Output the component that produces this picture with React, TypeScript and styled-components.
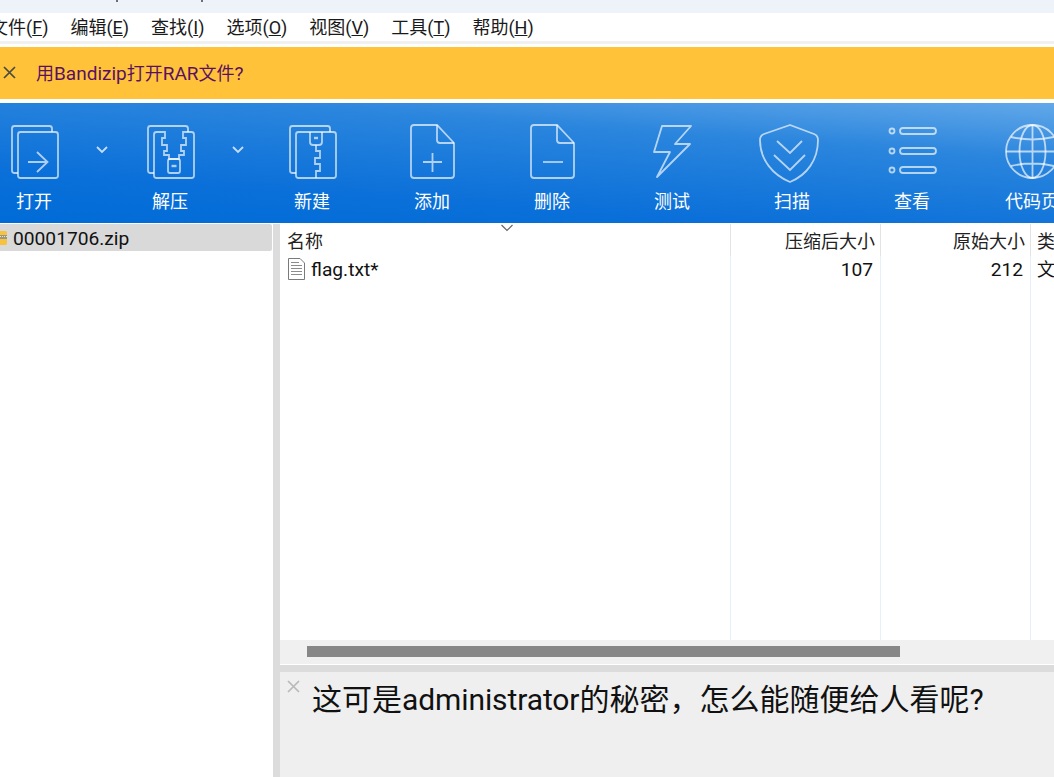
import React from 'react'
import styled, { createGlobalStyle } from 'styled-components'

const GlobalStyle = createGlobalStyle`
  html, body {
    margin: 0;
    padding: 0;
    background: #fff;
    overflow: hidden;
  }
  * { box-sizing: border-box; }
`

const Page = styled.div`
  width: 1054px;
  height: 777px;
  overflow: hidden;
  display: flex;
  flex-direction: column;
  font-family: Roboto, "Noto Sans CJK SC", sans-serif;
  font-size: 18px;
  color: #111;
  background: #fff;
`

const TitleBar = styled.div`
  height: 13px;
  flex: none;
  background: #eef2f9;
  display: flex;
  align-items: flex-start;
  padding-left: 116px;
  gap: 83px;
`

const TitleTick = styled.span`
  width: 2px;
  height: 2px;
  background: #6b6f78;
`

const MenuBar = styled.nav`
  height: 28px;
  flex: none;
  display: flex;
  align-items: center;
  gap: 22px;
  margin-left: -10px;
  padding-top: 2px;
  white-space: nowrap;
  line-height: 26px;
`

const MenuItem = styled.span`
  color: #1a1a1a;
`

const MenuRule = styled.div`
  height: 3px;
  flex: none;
  background: #f0f0f0;
  margin-bottom: 3px;
`

const Notice = styled.div`
  height: 52px;
  flex: none;
  background: #ffc239;
  display: flex;
  align-items: center;
  gap: 19px;
  padding: 0 0 2px 2px;
  margin-bottom: 4px;
  color: #5a1162;
  font-size: 19px;
`

const NoticeCjk = styled.span`
  font-size: 18px;
`

const Toolbar = styled.div`
  height: 120px;
  flex: none;
  display: flex;
  margin-left: -26px;
  width: 1200px;
  background: linear-gradient(184deg, #62a8e9 0%, #2a85dd 30%, #0b70d9 72%, #006bd7 100%);
  background-size: 1054px 120px;
  background-position: 26px 0;
  background-repeat: no-repeat;
`

const Tool = styled.div`
  width: 120px;
  flex: none;
  display: flex;
  flex-direction: column;
  align-items: center;
  padding-top: 19px;
  color: #fff;
`

const ToolIcon = styled.svg`
  display: block;
  width: 60px;
  height: 60px;
  fill: none;
  stroke: rgba(255, 255, 255, 0.66);
  stroke-width: 1.8;
  overflow: visible;
`

const ToolLabel = styled.span`
  margin-top: 8px;
  line-height: 24px;
  white-space: nowrap;
`

const DropSlot = styled.div<{ $trail?: number }>`
  width: 16px;
  flex: none;
  margin-right: ${(p) => p.$trail ?? 0}px;
  padding-top: 41px;
`

const Chevron = styled.svg`
  display: block;
  width: 16px;
  height: 12px;
  fill: none;
  stroke: rgba(255, 255, 255, 0.75);
  stroke-width: 1.8;
`

const Workspace = styled.div`
  flex: 1;
  min-height: 0;
  display: flex;
  padding-top: 1px;
`

const Sidebar = styled.aside`
  width: 273px;
  flex: none;
  background: #fff;
`

const TreeRow = styled.div`
  width: 272px;
  height: 27px;
  background: #d9d9d9;
  border-radius: 0 2px 2px 0;
  display: flex;
  align-items: center;
  gap: 6px;
  font-size: 19.2px;
  line-height: 26px;
  color: #111;
`

const TreeLabel = styled.span`
  padding-top: 3px;
`

const VSplitter = styled.div`
  width: 7px;
  flex: none;
  background: #dcdcdc;
`

const Main = styled.div`
  flex: 1;
  min-width: 0;
  display: flex;
  flex-direction: column;
`

const FileList = styled.div`
  position: relative;
  height: 416px;
  flex: none;
  display: flex;
  overflow: hidden;
`

const SortMark = styled.svg`
  position: absolute;
  left: 220px;
  top: 0;
  width: 14px;
  height: 8px;
  fill: none;
  stroke: #666;
  stroke-width: 1.2;
`

const Column = styled.div<{ $width: number; $numeric?: boolean }>`
  width: ${(p) => p.$width}px;
  flex: none;
  display: flex;
  flex-direction: column;
  border-right: 1px solid #e6f0fb;
  text-align: ${(p) => (p.$numeric ? 'right' : 'left')};
  white-space: nowrap;
`

const HeadCell = styled.div<{ $rule?: boolean; $inset: number }>`
  height: 32px;
  line-height: 36px;
  padding: 0 5px 0 ${(p) => p.$inset}px;
  margin-right: -1px;
  border-right: 1px solid ${(p) => (p.$rule ? '#e3e3e3' : 'transparent')};
  color: #222;
`

const Cell = styled.div<{ $inset: number }>`
  height: 26px;
  line-height: 28px;
  padding: 0 5px 0 ${(p) => p.$inset}px;
  font-size: 19.2px;
  color: #111;
  display: flex;
  align-items: flex-start;
  gap: 6px;
`

const TypeCell = styled(Cell)`
  font-size: 18px;
`

const NumberCell = styled(Cell)`
  display: block;
  padding-right: 7px;
  text-align: right;
`

const ScrollTrack = styled.div`
  height: 24px;
  flex: none;
  background: #f0f0f0;
  padding: 6px 0 0 27px;
`

const ScrollThumb = styled.div`
  width: 593px;
  height: 11px;
  background: #878787;
`

const HSplitter = styled.div`
  height: 7px;
  flex: none;
  margin-top: 1px;
  background: #dcdcdc;
`

const Details = styled.div`
  flex: 1;
  background: #efefef;
  display: flex;
  align-items: flex-start;
  gap: 11px;
  padding: 7px 0 0 6px;
`

const DetailText = styled.div`
  font-size: 30px;
  line-height: 42px;
  color: #111;
  white-space: nowrap;
`

const DetailLatin = styled.span`
  letter-spacing: -0.1px;
`

const CloseGlyph = styled.svg<{ $tone: string }>`
  display: block;
  flex: none;
  width: 15px;
  height: 15px;
  fill: none;
  stroke: ${(p) => p.$tone};
  stroke-width: 1.7;
`

const ArchiveGlyph = styled.svg`
  display: block;
  flex: none;
  width: 7px;
  height: 15px;
`

const TextFileGlyph = styled.svg`
  display: block;
  flex: none;
  width: 17px;
  height: 22px;
  margin-top: 2px;
  fill: #fff;
  stroke: #7a7a7a;
`

const Close = ({ tone }: { tone: string }) => (
  <CloseGlyph $tone={tone} viewBox="0 0 15 15">
    <path d="M2 2 13 13M13 2 2 13" />
  </CloseGlyph>
)

const DropDown = ({ trail }: { trail?: number }) => (
  <DropSlot $trail={trail}>
    <Chevron viewBox="0 0 16 12">
      <path d="M3 3 8 8 13 3" />
    </Chevron>
  </DropSlot>
)

const icons: Record<string, React.ReactNode> = {
  open: (
    <>
      <path d="M14 51H10.500A2.500 2.500 0 0 1 8 48.500V6.500A2.500 2.500 0 0 1 10.500 4H45.500A2.500 2.500 0 0 1 48 6.500V10" />
      <rect x="14" y="10" width="40" height="46" rx="2.500" />
      <path d="M24 40H43.500M33 30 43.500 40 33 50" />
    </>
  ),
  extract: (
    <>
      <path d="M14 51H10.500A2.500 2.500 0 0 1 8 48.500V6.500A2.500 2.500 0 0 1 10.500 4H45.500A2.500 2.500 0 0 1 48 6.500V10" />
      <path d="M25 10H16.500A2.500 2.500 0 0 0 14 12.500V53.500A2.500 2.500 0 0 0 16.500 56H51.500A2.500 2.500 0 0 0 54 53.500V12.500A2.500 2.500 0 0 0 51.500 10H43V16H46V23H41V29H44V33H39V37H29V33H24V29H27V23H22V16H25Z" />
      <rect x="28" y="37" width="12" height="14" rx="2" />
      <path d="M31.500 44H36.500" strokeWidth="2.400" />
    </>
  ),
  create: (
    <>
      <path d="M14 51H10.500A2.500 2.500 0 0 1 8 48.500V6.500A2.500 2.500 0 0 1 10.500 4H45.500A2.500 2.500 0 0 1 48 6.500V10" />
      <rect x="14" y="10" width="40" height="46" rx="2.500" />
      <path d="M28 10V20A3 3 0 0 0 31 23H37A3 3 0 0 0 40 20V10" />
      <path d="M32 16H36" strokeWidth="2.400" />
      <path d="M34 23V29H38V36H33V42H38V49H34V56" />
    </>
  ),
  add: (
    <>
      <path d="M35 3H12A3 3 0 0 0 9 6V53A3 3 0 0 0 12 56H49A3 3 0 0 0 52 53V21Z" />
      <path d="M35 3V18A3 3 0 0 0 38 21H52" />
      <path d="M21 40H40M30.500 31V50" />
    </>
  ),
  remove: (
    <>
      <path d="M35 3H12A3 3 0 0 0 9 6V53A3 3 0 0 0 12 56H49A3 3 0 0 0 52 53V21Z" />
      <path d="M35 3V18A3 3 0 0 0 38 21H52" />
      <path d="M21 40H41" />
    </>
  ),
  test: <path d="M20 4H49L33 22H48L15 55 28 30H12Z" strokeLinejoin="round" />,
  scan: (
    <>
      <path d="M28 3 52 12Q56 13.500 56 18C56 38 45 53 28 60 11 53 -2 38 -2 18Q-2 13.500 2 12Z" strokeLinejoin="round" />
      <path d="M15 19 28 31 40 19M12 33 28 48 43 33" />
    </>
  ),
  list: (
    <>
      <circle cx="10" cy="9" r="2.500" />
      <circle cx="10" cy="29" r="2.500" />
      <circle cx="10" cy="48" r="2.500" />
      <rect x="18" y="6" width="36" height="6" rx="3" />
      <rect x="18" y="26" width="36" height="6" rx="3" />
      <rect x="18" y="45" width="36" height="6" rx="3" />
    </>
  ),
  codepage: (
    <>
      <circle cx="30.500" cy="29.500" r="26.500" />
      <ellipse cx="30.500" cy="29.500" rx="13" ry="26.500" />
      <path d="M30.500 3V56M4 29.500H57M9 15Q30.500 20 52 15M9 44Q30.500 39 52 44" />
    </>
  ),
}

const ToolButton = ({ icon, label }: { icon: string; label: string }) => (
  <Tool>
    <ToolIcon viewBox="0 0 60 60">{icons[icon]}</ToolIcon>
    <ToolLabel>{label}</ToolLabel>
  </Tool>
)

export default function App() {
  return (
    <Page>
      <GlobalStyle />
      <TitleBar>
        <TitleTick />
        <TitleTick />
      </TitleBar>
      <MenuBar>
        <MenuItem>文件(<u>F</u>)</MenuItem>
        <MenuItem>编辑(<u>E</u>)</MenuItem>
        <MenuItem>查找(<u>I</u>)</MenuItem>
        <MenuItem>选项(<u>O</u>)</MenuItem>
        <MenuItem>视图(<u>V</u>)</MenuItem>
        <MenuItem>工具(<u>T</u>)</MenuItem>
        <MenuItem>帮助(<u>H</u>)</MenuItem>
      </MenuBar>
      <MenuRule />
      <Notice>
        <Close tone="#4a4a40" />
        <span>
          <NoticeCjk>用</NoticeCjk>Bandizip<NoticeCjk>打开</NoticeCjk>RAR<NoticeCjk>文件</NoticeCjk>?
        </span>
      </Notice>
      <Toolbar>
        <ToolButton icon="open" label="打开" />
        <DropDown />
        <ToolButton icon="extract" label="解压" />
        <DropDown trail={6} />
        <ToolButton icon="create" label="新建" />
        <ToolButton icon="add" label="添加" />
        <ToolButton icon="remove" label="删除" />
        <ToolButton icon="test" label="测试" />
        <ToolButton icon="scan" label="扫描" />
        <ToolButton icon="list" label="查看" />
        <ToolButton icon="codepage" label="代码页" />
      </Toolbar>
      <Workspace>
        <Sidebar>
          <TreeRow>
            <ArchiveGlyph viewBox="0 0 7 15">
              <path d="M0 1H5.500A1.500 1.500 0 0 1 7 2.500V13.500A1.500 1.500 0 0 1 5.500 15H0Z" fill="#f7c33f" />
              <path d="M0 5H7V9H0Z" fill="#9b9684" />
              <path d="M0 6.500H7" stroke="#e6e2d2" strokeDasharray="1 1" />
            </ArchiveGlyph>
            <TreeLabel>00001706.zip</TreeLabel>
          </TreeRow>
        </Sidebar>
        <VSplitter />
        <Main>
          <FileList>
            <SortMark viewBox="0 0 14 8">
              <path d="M1.500 1 7 6.500 12.500 1" />
            </SortMark>
            <Column $width={451}>
              <HeadCell $inset={7} $rule>名称</HeadCell>
              <Cell $inset={8}>
                <TextFileGlyph viewBox="0 0 17 22">
                  <path d="M.5.500H12L16.500 5V21.500H.5Z" />
                  <path d="M3 4.500H11M3 7.500H14M3 10.500H14M3 13.500H14M3 16.500H14" stroke="#8c8c8c" />
                </TextFileGlyph>
                <span>flag.txt*</span>
              </Cell>
            </Column>
            <Column $width={150} $numeric>
              <HeadCell $inset={0} $rule>压缩后大小</HeadCell>
              <NumberCell $inset={0}>107</NumberCell>
            </Column>
            <Column $width={150} $numeric>
              <HeadCell $inset={0} $rule>原始大小</HeadCell>
              <NumberCell $inset={0}>212</NumberCell>
            </Column>
            <Column $width={100}>
              <HeadCell $inset={6}>类型</HeadCell>
              <TypeCell $inset={6}>文本文档</TypeCell>
            </Column>
          </FileList>
          <ScrollTrack>
            <ScrollThumb />
          </ScrollTrack>
          <HSplitter />
          <Details>
            <Close tone="#b9b9b9" />
            <DetailText>
              这可是<DetailLatin>administrator</DetailLatin>的秘密，怎么能随便给人看呢?
            </DetailText>
          </Details>
        </Main>
      </Workspace>
    </Page>
  )
}
